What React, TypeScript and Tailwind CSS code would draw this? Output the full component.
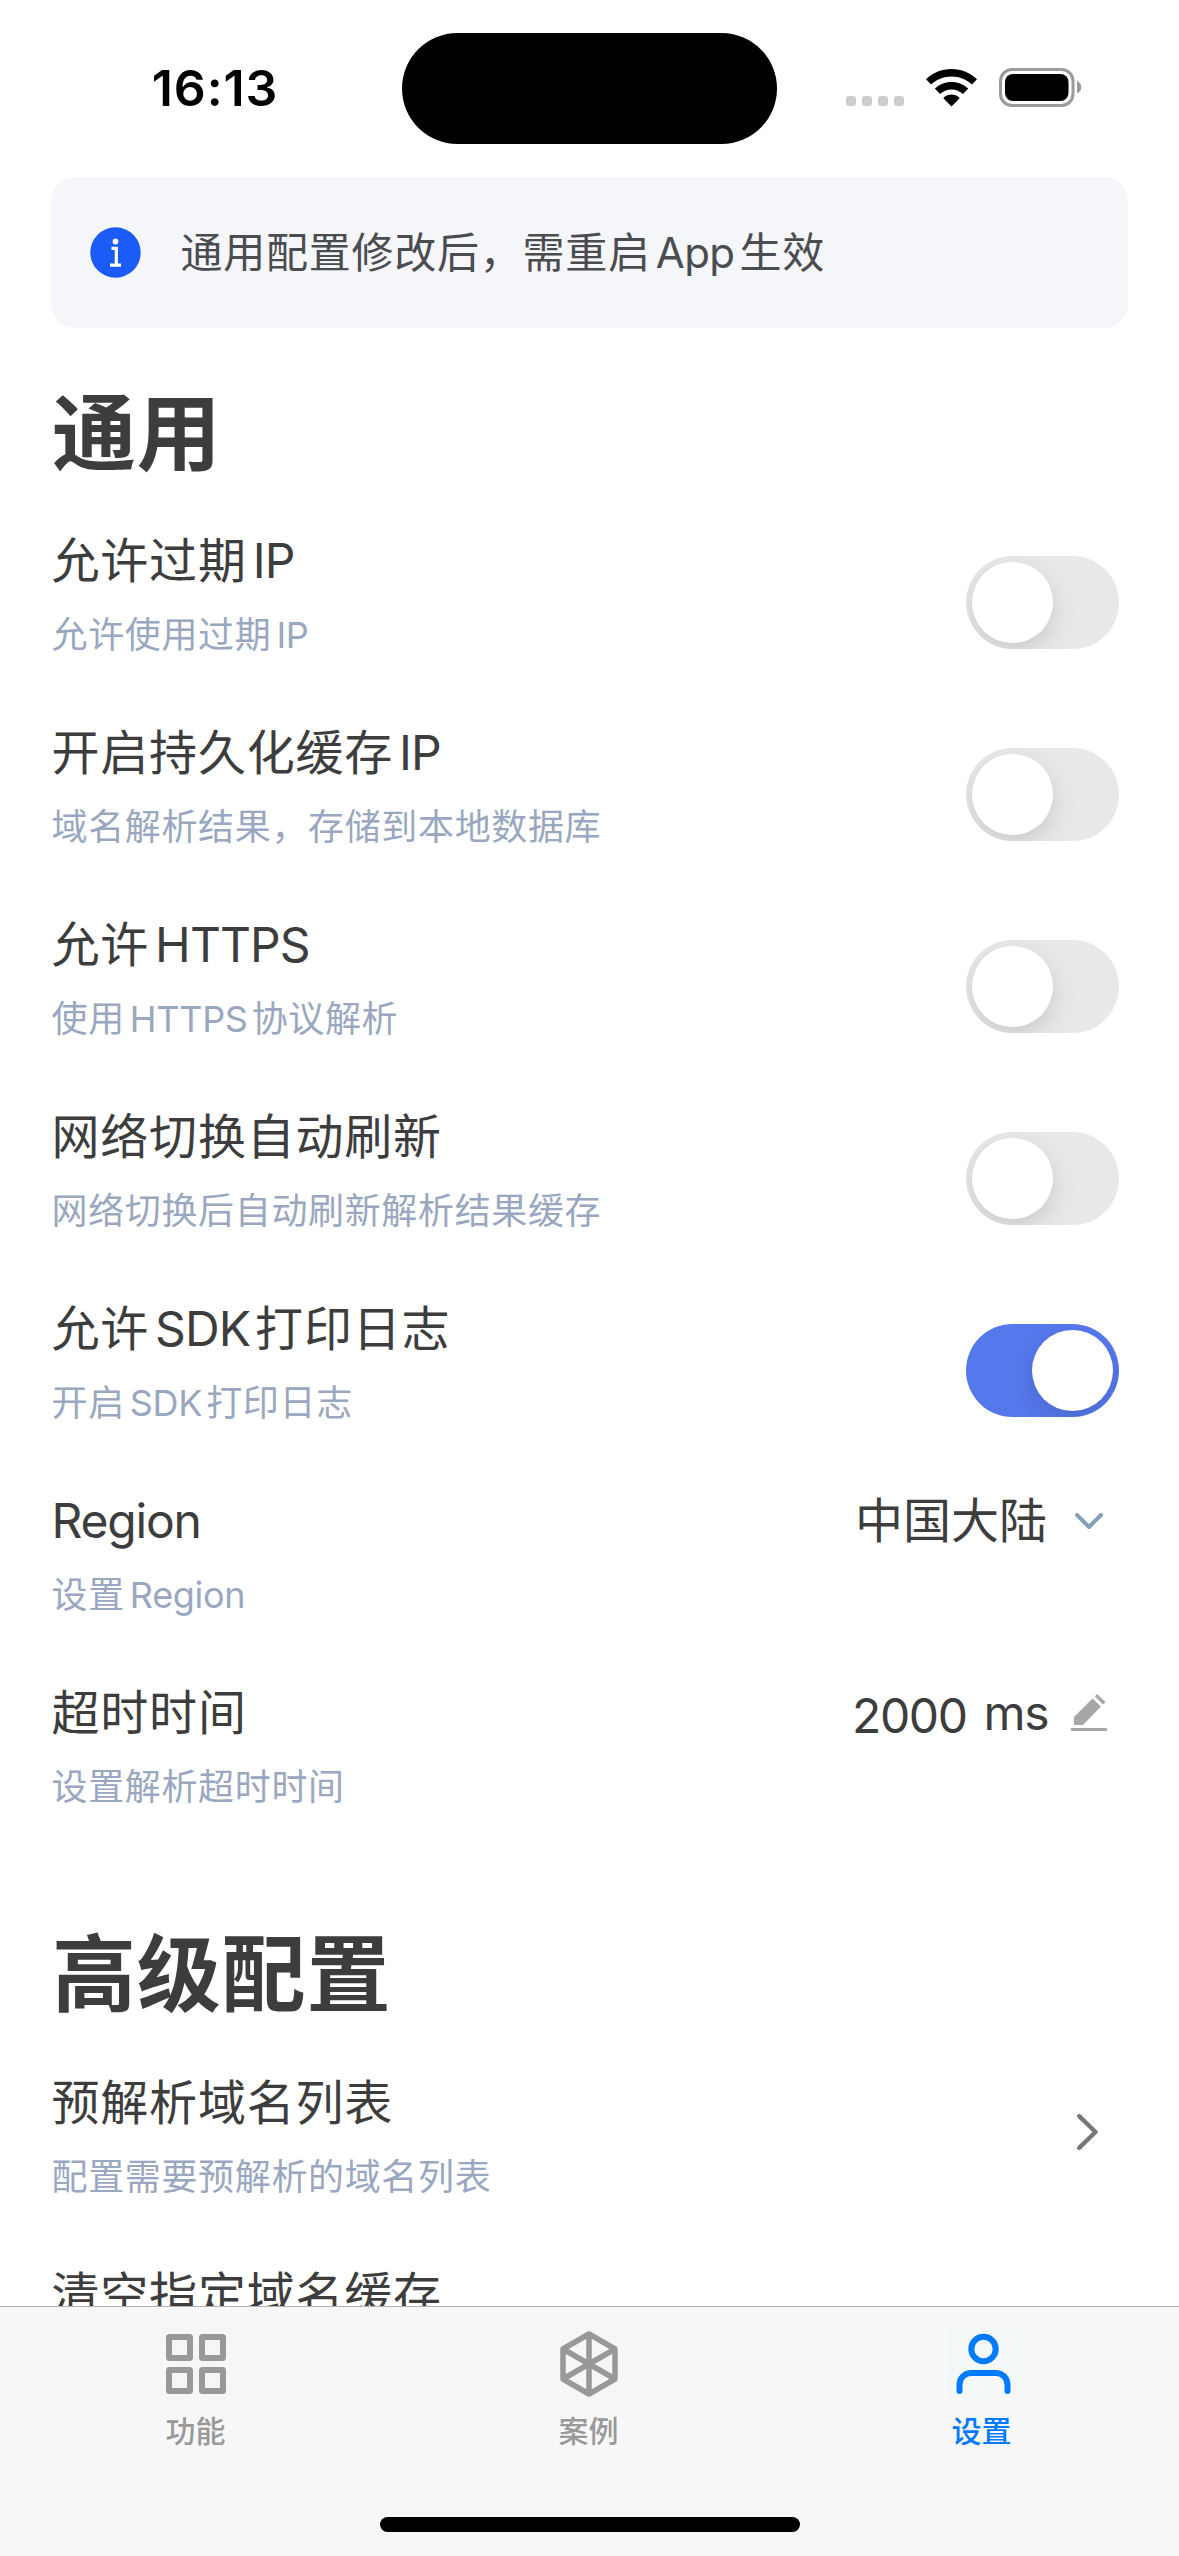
import React from 'react';

const FONT = "font-['Inter','Noto_Sans_CJK_SC',sans-serif]";

/** Chinese text with a thin gap on each side of a Latin run. */
function Mixed({ text, latin, alone = latin }: { text: string; latin: string; alone?: string }) {
  const parts = text.split(/([A-Za-z]+)/).filter(Boolean);
  return (
    <>
      {parts.map((part, i) =>
        /[A-Za-z]/.test(part) ? (
          <span key={i} className={parts.length > 1 ? latin : alone}>
            {part}
          </span>
        ) : (
          <React.Fragment key={i}>{part}</React.Fragment>
        ),
      )}
    </>
  );
}

function StatusBar() {
  return (
    <header className="flex h-[177px] shrink-0 items-start">
      <div className="flex w-[402px] justify-center pt-[58px]">
        <span className="pl-[28px] text-[50px] font-semibold leading-[60px] tracking-[0.9px] text-black">16:13</span>
      </div>
      <div className="mt-[33px] h-[111px] w-[375px] rounded-full bg-black" />
      <div className="flex items-start pl-[69px] pt-[68px]">
        <div className="mt-7 flex gap-1.5">
          {[0, 1, 2, 3].map((d) => (
            <span key={d} className="size-2.5 rounded-[3px] bg-[#cccccc]" />
          ))}
        </div>
        <svg className="ml-[22px] mt-px" width="51" height="38" viewBox="0 0 51 38">
          <path d="M25.5 0C35.5 0 44.500 4 51 10.300L45.900 15.600C40.600 10.600 33.500 7.600 25.500 7.600S10.400 10.600 5.100 15.600L0 10.300C6.500 4 15.500 0 25.500 0Z" />
          <path d="M25.500 13C32 13 37.900 15.500 42.200 19.600L37 25C34 22.100 30 20.400 25.500 20.400S17 22.100 14 25L8.800 19.600C13.100 15.500 19 13 25.500 13Z" />
          <path d="M25.500 25.400C28.500 25.400 31.200 26.600 33.200 28.600C33.500 29 33.500 29.400 33.200 29.700L25.500 37.500L17.800 29.700C17.500 29.400 17.500 29 17.800 28.600C19.800 26.600 22.500 25.400 25.500 25.400Z" />
        </svg>
        <svg className="ml-[22px]" width="83" height="39" viewBox="0 0 83 39">
          <rect x="1.500" y="1.500" width="72.500" height="36" rx="11.500" fill="none" stroke="#9b9b9b" strokeWidth="3" />
          <rect x="6" y="6" width="63.500" height="27" rx="8" />
          <path d="M78 13C80.600 14 82.300 16.500 82.300 19.300S80.600 24.500 78 25.500Z" fill="#9b9b9b" />
        </svg>
      </div>
    </header>
  );
}

function Notice() {
  return (
    <div className="mx-[51px] flex h-[151px] shrink-0 items-center rounded-[24px] bg-[#f4f6fa] pl-[39px]">
      <svg width="51" height="51" viewBox="0 0 51 51">
        <circle cx="25.500" cy="25.500" r="25.200" fill="#1b5bf8" />
        <circle cx="25.500" cy="14.500" r="2.900" fill="#fff" />
        <path d="M21.500 21.400H26.300V38.200M20 38.200H31" fill="none" stroke="#fff" strokeWidth="3.200" />
      </svg>
      <p className="ml-[39.5px] text-[42px] leading-[60px] tracking-[0.75px] text-[#4b4c50]">
        <Mixed text="通用配置修改后，需重启App生效" latin="mx-[5px] tracking-[-0.6px]" />
      </p>
    </div>
  );
}

function Switch({ on = false }: { on?: boolean }) {
  return (
    <div
      role="switch"
      aria-checked={on}
      className={
        on
          ? 'flex h-[93px] w-[153px] justify-end overflow-hidden rounded-full bg-[#5578ec] p-1.5'
          : 'flex h-[93px] w-[153px] justify-start overflow-hidden rounded-full bg-[#e8e8ea] p-1.5'
      }
    >
      <div className="size-[81px] rounded-full bg-white shadow-[0_9px_24px_rgba(0,0,0,0.13)]" />
    </div>
  );
}

function Item({ title, desc, children }: { title: string; desc?: string; children?: React.ReactNode }) {
  return (
    <div className="flex h-48 shrink-0 justify-between pl-[51.5px]">
      <div className="pt-[22px]">
        <h3 className="text-[48px] font-normal leading-[66px] tracking-[0.8px] text-[#3d3d3d]">
          <Mixed text={title} latin="ml-[6px] mr-[5px] tracking-[-0.9px]" alone="tracking-[-1.2px]" />
        </h3>
        {desc && (
          <p className="mt-4 text-[36px] leading-[50px] tracking-[0.65px] text-[#9aa7c0]">
            <Mixed text={desc} latin="ml-[5px] mr-[4px] tracking-[-0.3px]" />
          </p>
        )}
      </div>
      {children}
    </div>
  );
}

function SwitchItem({ title, desc, on }: { title: string; desc: string; on?: boolean }) {
  return (
    <Item title={title} desc={desc}>
      <div className="mr-[60px] mt-[50px]">
        <Switch on={on} />
      </div>
    </Item>
  );
}

function LinkItem({ title, desc }: { title: string; desc?: string }) {
  return (
    <Item title={title} desc={desc}>
      <svg className="mr-[81px] mt-[66px]" width="21" height="36" viewBox="0 0 21 36">
        <path d="M2.200 2.200L18.500 18L2.200 33.800" fill="none" stroke="#777978" strokeWidth="4.400" strokeLinecap="round" strokeLinejoin="round" />
      </svg>
    </Item>
  );
}

function TabBar() {
  return (
    <nav className="flex h-[250px] shrink-0 flex-col items-center border-t border-[#b2b2b2] bg-[#f7f7f7]">
      <div className="-ml-px grid w-full grid-cols-3 pt-[21px] text-[30px] font-medium leading-[40px] text-[#999999]">
        <div className="flex flex-col items-center">
          <svg className="bg-[#f6f6f6]" width="72" height="72" viewBox="0 0 72 72" fill="none" stroke="#979997" strokeWidth="6">
            <rect x="9" y="9" width="21" height="21" rx="0.500" />
            <rect x="42" y="9" width="21" height="21" rx="0.500" />
            <rect x="9" y="42" width="21" height="21" rx="0.500" />
            <rect x="42" y="42" width="21" height="21" rx="0.500" />
          </svg>
          <span className="mr-px mt-[11px]">功能</span>
        </div>
        <div className="flex flex-col items-center">
          <svg className="bg-[#f6f6f6]" width="72" height="72" viewBox="0 0 72 72" fill="none" stroke="#979997" strokeWidth="5.500" strokeLinejoin="round">
            <path d="M36 6L62 21V51L36 66L10 51V21Z M36 6V66M10 21L62 51M62 21L10 51" />
          </svg>
          <span className="mr-px mt-[11px]">案例</span>
        </div>
        <div className="flex flex-col items-center text-[#007aff]">
          <svg className="bg-[#f3f7f8]" width="72" height="72" viewBox="0 0 72 72" fill="none" stroke="#007aff" strokeWidth="6" strokeLinecap="round">
            <circle cx="37.500" cy="21" r="12.200" />
            <path d="M13.500 63V57C13.500 50 18.500 45 25.500 45H49.500C56.500 45 61.500 50 61.500 57V63" />
          </svg>
          <span className="mr-px mt-[11px]">设置</span>
        </div>
      </div>
      <div className="mt-[66px] h-[15px] w-[420px] rounded-full bg-black" />
    </nav>
  );
}

export default function App() {
  return (
    <div lang="zh-CN" className={`flex h-[2556px] w-[1179px] flex-col overflow-hidden bg-white ${FONT} [text-autospace:no-autospace]`}>
      <StatusBar />
      <main className="flex min-h-0 flex-1 flex-col overflow-hidden">
        <Notice />
        <h2 className="mb-[-1px] mt-[46px] pl-[52px] text-[84px] font-semibold leading-[120px] tracking-[0.8px] text-[#3d3d3d]">通用</h2>
        <section className="mt-[13px] flex flex-col">
          <SwitchItem title="允许过期IP" desc="允许使用过期IP" />
          <SwitchItem title="开启持久化缓存IP" desc="域名解析结果，存储到本地数据库" />
          <SwitchItem title="允许HTTPS" desc="使用HTTPS协议解析" />
          <SwitchItem title="网络切换自动刷新" desc="网络切换后自动刷新解析结果缓存" />
          <SwitchItem title="允许SDK打印日志" desc="开启SDK打印日志" on />
          <Item title="Region" desc="设置Region">
            <div className="mr-[76px] flex h-[66px] items-center self-start pt-[44px]">
              <span className="text-[48px] leading-[66px] text-[#3d3d3d]">中国大陆</span>
              <svg className="ml-[28px]" width="28" height="17" viewBox="0 0 28 17">
                <path d="M2 2L14 14L26 2" fill="none" stroke="#82a1b9" strokeWidth="4" strokeLinecap="round" strokeLinejoin="round" />
              </svg>
            </div>
          </Item>
          <Item title="超时时间" desc="设置解析超时时间">
            <div className="mr-[72px] flex items-start pt-[22px] text-[48px] leading-[66px] text-[#3d3d3d]">
              <span className="mt-[3px] tracking-[-1.4px]">2000</span>
              <span className="ml-[17px] tracking-[-1.5px]">ms</span>
              <svg className="ml-[23px] mt-[14px]" width="36" height="37" viewBox="0 0 36 37" fill="#a7a7a7">
                <path d="M3 23L21.500 4.500L30 12.500L12 31H3Z M26 0L34.500 8L32 10.500L23.800 2.500Z M0 34H36V37H0Z" />
              </svg>
            </div>
          </Item>
        </section>
        <h2 className="mb-[-1px] mt-[65px] pl-[52px] text-[84px] font-semibold leading-[120px] tracking-[0.8px] text-[#3d3d3d]">高级配置</h2>
        <section className="mt-[14px] flex flex-col">
          <LinkItem title="预解析域名列表" desc="配置需要预解析的域名列表" />
          <LinkItem title="清空指定域名缓存" />
        </section>
      </main>
      <TabBar />
    </div>
  );
}
